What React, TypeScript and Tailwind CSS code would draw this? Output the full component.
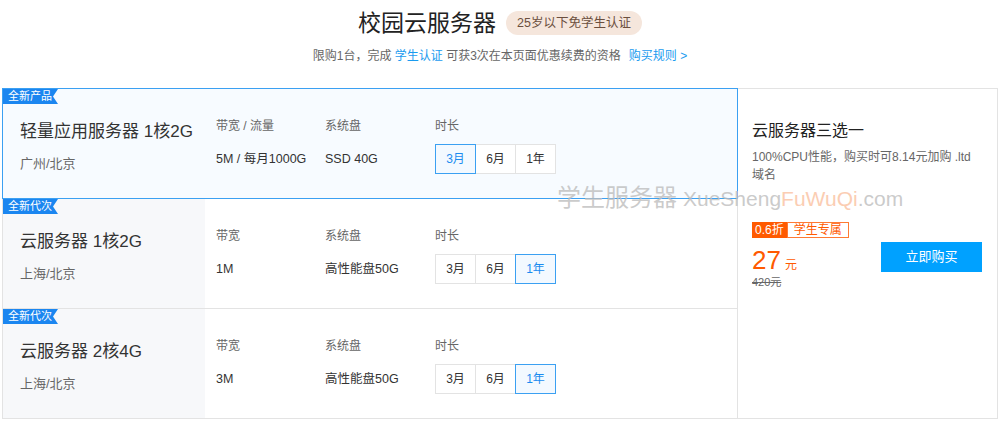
import React from "react";

const font = {
  fontFamily: '"Liberation Sans", "Noto Sans CJK SC", sans-serif',
};

type Plan = {
  tag: string;
  name: string;
  region: string;
  bwLabel: string;
  bw: string;
  disk: string;
  active: number;
  selected?: boolean;
};

const plans: Plan[] = [
  {
    tag: "全新产品",
    name: "轻量应用服务器 1核2G",
    region: "广州/北京",
    bwLabel: "带宽 / 流量",
    bw: "5M / 每月1000G",
    disk: "SSD 40G",
    active: 0,
    selected: true,
  },
  {
    tag: "全新代次",
    name: "云服务器 1核2G",
    region: "上海/北京",
    bwLabel: "带宽",
    bw: "1M",
    disk: "高性能盘50G",
    active: 2,
  },
  {
    tag: "全新代次",
    name: "云服务器 2核4G",
    region: "上海/北京",
    bwLabel: "带宽",
    bw: "3M",
    disk: "高性能盘50G",
    active: 2,
  },
];

const durations = ["3月", "6月", "1年"];

const PlanRow = ({ plan, first }: { plan: Plan; first: boolean }) => {
  return (
    <div
      className={
        plan.selected
          ? "relative flex h-[111px] border border-[#3ba0f2] bg-[#f7fbff]"
          : "relative flex h-[110px] border-x border-b border-[#e3e3e3] bg-white" +
            (first ? " border-t" : "")
      }
    >
      {/* tag ribbon */}
      <div className="absolute left-0 top-0 flex h-[15px] w-[55px] items-center bg-[#1b86f0] pl-[5px] text-[11px] leading-none text-white [clip-path:polygon(0_0,100%_0,calc(100%-5px)_50%,100%_100%,0_100%)]">
        {plan.tag}
      </div>

      <div
        className={
          "w-[202px] pl-[17px] pt-[31px] " +
          (plan.selected ? "" : "bg-[#f7f8fa]")
        }
      >
        <div className="text-[17px] leading-[24px] text-[#333]">{plan.name}</div>
        <div className="mt-[12px] text-[13px] leading-[16px] text-[#666]">
          {plan.region}
        </div>
      </div>

      <div className="flex pt-[29px]">
        <div className="w-[120px] pl-[11px]">
          <div className="text-[12px] leading-[16px] text-[#666]">{plan.bwLabel}</div>
          <div className="mt-[17px] text-[12.5px] leading-[16px] text-[#333]">{plan.bw}</div>
        </div>
        <div className="w-[110px]">
          <div className="text-[12px] leading-[16px] text-[#666]">系统盘</div>
          <div className="mt-[17px] text-[12.5px] leading-[16px] text-[#333]">{plan.disk}</div>
        </div>
        <div>
          <div className="text-[12px] leading-[16px] text-[#666]">时长</div>
          <div className="mt-[10px] flex">
            {durations.map((d, i) => (
              <div
                key={d}
                className={
                  "-ml-px flex h-[30px] w-[41px] items-center justify-center border text-[12px] first:ml-0 " +
                  (i === plan.active
                    ? "relative z-10 border-[#3ba0f2] bg-[#f3f9ff] text-[#1b8cf0]"
                    : "border-[#e3e3e3] bg-white text-[#333]")
                }
              >
                {d}
              </div>
            ))}
          </div>
        </div>
      </div>
    </div>
  );
};

export default function App() {
  return (
    <div className="relative h-[422px] w-[1000px] overflow-hidden bg-white" style={font}>
      {/* header */}
      <div className="flex flex-col items-center pt-[11px]">
        <div className="flex items-center gap-[10px]">
          <div className="text-[23px] leading-[24px] text-[#222]">校园云服务器</div>
          <div className="flex h-[24px] items-center rounded-full bg-[#f5e6dc] px-[11px] text-[12.5px] text-[#6b4f3e]">
            25岁以下免学生认证
          </div>
        </div>
        <div className="mt-[13px] text-[12px] leading-[16px] text-[#666]">
          限购1台，完成 <span className="text-[#1a9bef]">学生认证</span> 可获3次在本页面优惠续费的资格
          <span className="ml-[8px] text-[#1a9bef]">购买规则 &gt;</span>
        </div>
      </div>

      {/* main box */}
      <div className="mt-[24px] flex px-[2px]">
        <div className="w-[736px] shrink-0">
          {plans.map((p, i) => (
            <PlanRow key={i} plan={p} first={i === 0} />
          ))}
        </div>
        <div className="h-[331px] flex-1 border-y border-r border-[#e3e3e3] bg-white pl-[14px] pt-[31px]">
          <div className="text-[16px] leading-[22px] text-[#222]">云服务器三选一</div>
          <div className="mt-[6px] w-[222px] text-[12px] leading-[18px] text-[#666]">
            100%CPU性能，购买时可8.14元加购 .ltd 域名
          </div>
          <div className="mt-[38px] flex items-end justify-between pr-[15px]">
            <div>
              <div className="flex h-[16px] text-[12px] leading-none">
                <div className="flex items-center bg-[#ff5a00] px-[3px] text-white">0.6折</div>
                <div className="flex items-center border border-[#ff7a33] px-[6px] text-[#ff5a00]">
                  学生专属
                </div>
              </div>
              <div className="mt-[8px] flex items-baseline text-[#ff5a00]">
                <span className="text-[26px] leading-[28px]">27</span>
                <span className="ml-[4px] text-[12px]">元</span>
              </div>
              <div className="mt-[1px] text-[11px] leading-[14px] text-[#666] line-through">420元</div>
            </div>
            <div className="mb-[17px] flex h-[30px] w-[101px] items-center justify-center bg-[#00a1ff] text-[13px] text-white">
              立即购买
            </div>
          </div>
        </div>
      </div>

      {/* watermark */}
      <div className="pointer-events-none absolute left-[557px] top-[184px] flex items-baseline whitespace-nowrap">
        <span className="text-[24px] leading-[28px] text-[#bdbdbd]/80">学生服务器</span>
        <span className="ml-[6px] text-[21px] leading-[28px] text-[#bdbdbd]/80">
          XueSheng<span className="text-[#fbcdb3]">FuWuQi</span>.com
        </span>
      </div>
    </div>
  );
}
